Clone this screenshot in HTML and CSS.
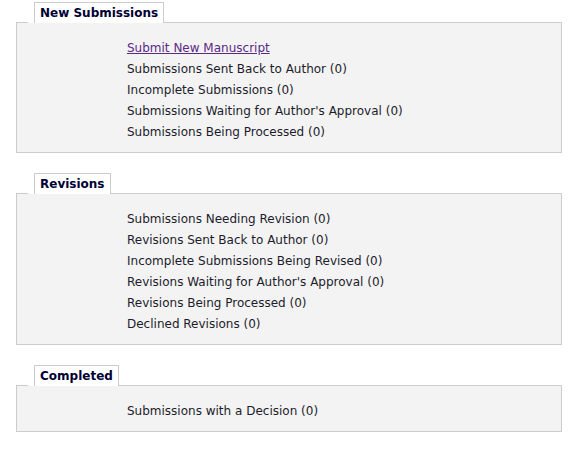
FILE: index.html
```html
<!DOCTYPE html>
<html lang="en">
<head>
<meta charset="utf-8">
<title>Author Dashboard</title>
<link rel="stylesheet" href="styles.css">
</head>
<body>
<main class="dashboard">
  <section class="panel">
    <h2 class="panel-title">New Submissions</h2>
    <ul class="panel-body">
      <li><a class="link" href="#">Submit New Manuscript</a></li>
      <li>Submissions Sent Back to Author (0)</li>
      <li>Incomplete Submissions (0)</li>
      <li>Submissions Waiting for Author's Approval (0)</li>
      <li>Submissions Being Processed (0)</li>
    </ul>
  </section>
  <section class="panel">
    <h2 class="panel-title">Revisions</h2>
    <ul class="panel-body">
      <li>Submissions Needing Revision (0)</li>
      <li>Revisions Sent Back to Author (0)</li>
      <li>Incomplete Submissions Being Revised (0)</li>
      <li>Revisions Waiting for Author's Approval (0)</li>
      <li>Revisions Being Processed (0)</li>
      <li>Declined Revisions (0)</li>
    </ul>
  </section>
  <section class="panel">
    <h2 class="panel-title">Completed</h2>
    <ul class="panel-body">
      <li>Submissions with a Decision (0)</li>
    </ul>
  </section>
</main>
</body>
</html>
```
FILE: styles.css
```css
html, body {
  margin: 0;
  padding: 0;
  background: #ffffff;
}

body {
  font-family: "DejaVu Sans", Verdana, sans-serif;
  font-size: 12px;
  color: #1c1c2c;
}

.dashboard {
  display: flex;
  flex-direction: column;
  gap: 20px;
  padding: 2px 8px 0 16px;
}

.panel {
  display: flex;
  flex-direction: column;
  align-items: flex-start;
}

.panel-title {
  position: relative;
  z-index: 1;
  margin: 0 0 -1px 18px;
  padding: 3px 5px;
  font-size: 12px;
  line-height: 14px;
  font-weight: bold;
  color: #000033;
  background: #ffffff;
  border: 1px solid #cccccc;
  border-bottom: none;
  box-shadow: -6px 0 0 #ffffff;
}

.panel-body {
  align-self: stretch;
  margin: 0;
  list-style: none;
  padding: 15px 0 9px 110px;
  background: #f3f3f3;
  border: 1px solid #cccccc;
}

.panel-body li {
  line-height: 21px;
}

.link {
  color: #5a2a86;
  text-decoration: underline;
}
```
